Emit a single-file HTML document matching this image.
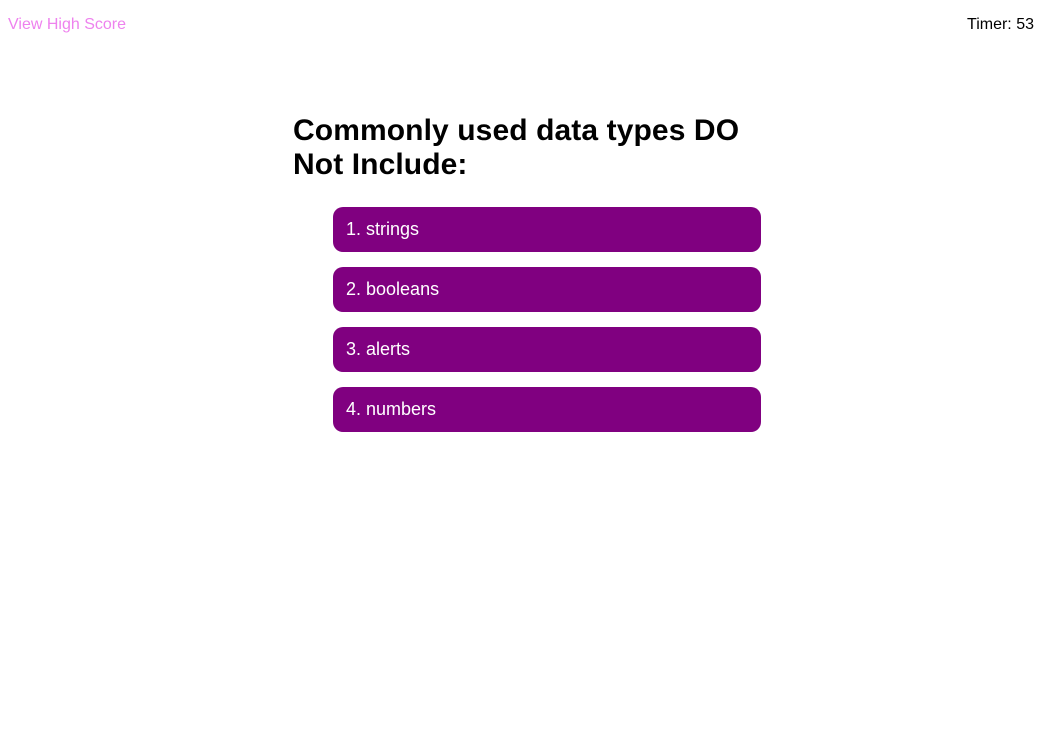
<!DOCTYPE html>
<html><head><style>
body{margin:0;width:1054px;height:739px;background:#fff;font-family:"Liberation Sans",Arial,sans-serif;position:relative;overflow:hidden}
.hs{position:absolute;left:8px;top:16px;font-size:16px;color:#ee82ee}
.tm{position:absolute;right:20px;top:16px;font-size:16px;color:#000}
h1{position:absolute;left:293px;top:114px;width:470px;margin:0;font-size:30px;line-height:34px;font-weight:bold;letter-spacing:0.1px}
.b{position:absolute;left:333px;width:428px;height:45px;background:#800080;border-radius:10px;color:#fff;font-size:18px;line-height:45px;padding-left:13px;box-sizing:border-box}
</style></head><body>
<div class="hs">View High Score</div>
<div class="tm">Timer: 53</div>
<h1>Commonly used data types DO Not Include:</h1>
<div class="b" style="top:207px">1. strings</div>
<div class="b" style="top:267px">2. booleans</div>
<div class="b" style="top:327px">3. alerts</div>
<div class="b" style="top:387px">4. numbers</div>
</body></html>
